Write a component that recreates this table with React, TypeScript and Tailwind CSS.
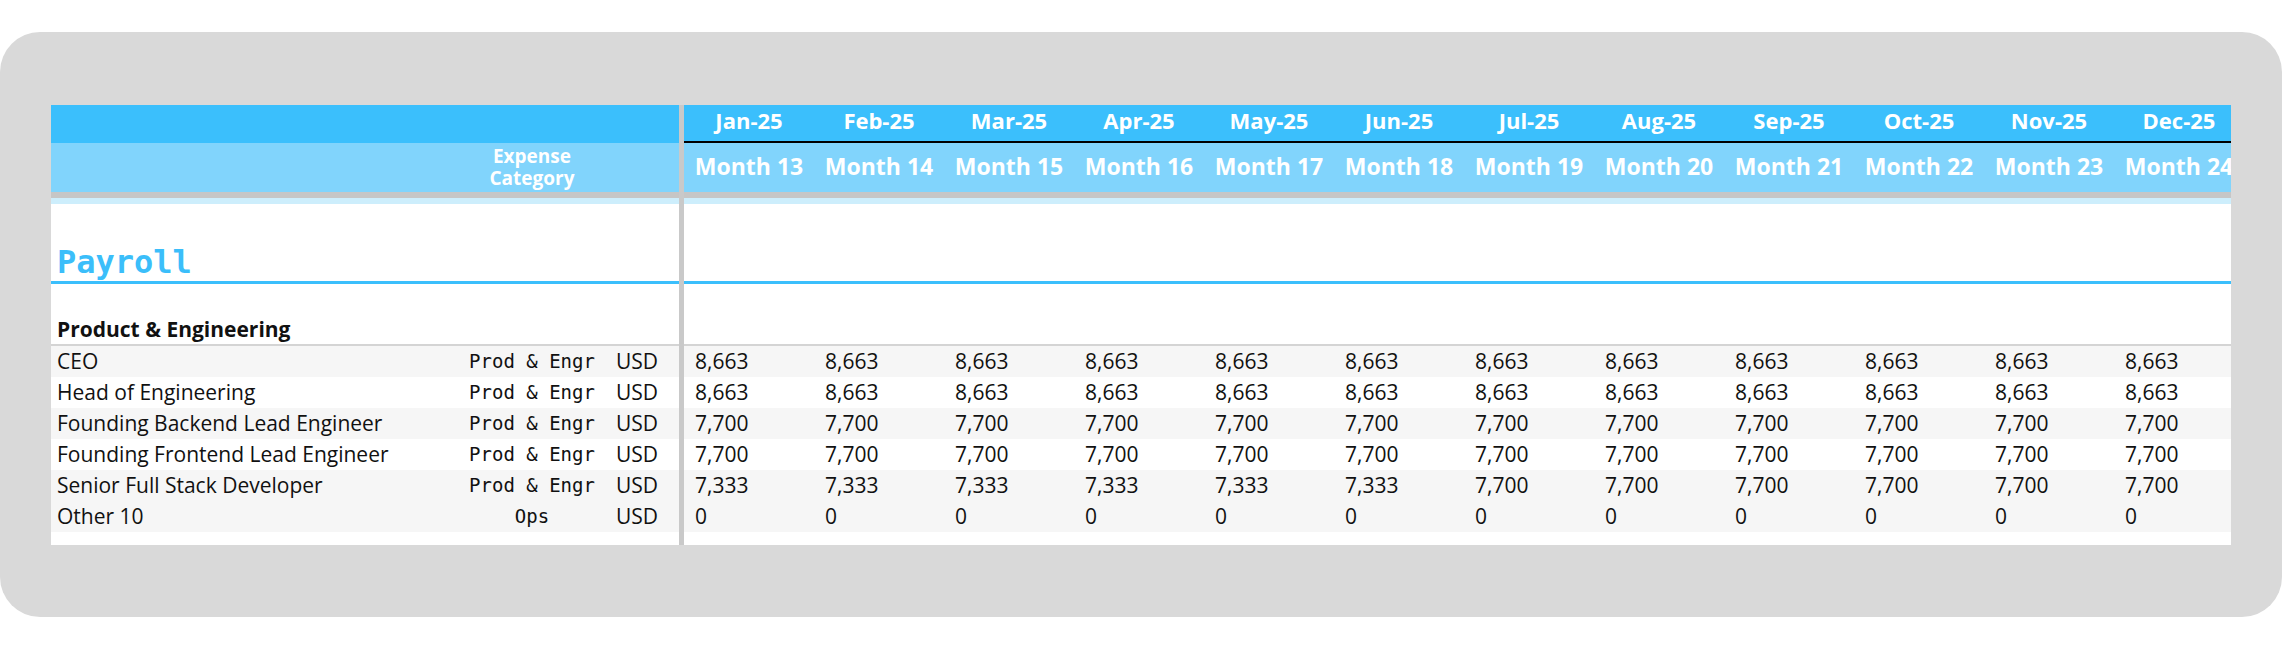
import React from 'react'

// Month headers, left to right
const MONTHS = [
  'Jan-25', 'Feb-25', 'Mar-25', 'Apr-25', 'May-25', 'Jun-25',
  'Jul-25', 'Aug-25', 'Sep-25', 'Oct-25', 'Nov-25', 'Dec-25',
]

const repeat = (v: string, n: number) => Array.from({ length: n }, () => v)

// Payroll lines for Product & Engineering
const ROWS = [
  { name: 'CEO', category: 'Prod & Engr', values: repeat('8,663', 12), shaded: true },
  { name: 'Head of Engineering', category: 'Prod & Engr', values: repeat('8,663', 12), shaded: false },
  { name: 'Founding Backend Lead Engineer', category: 'Prod & Engr', values: repeat('7,700', 12), shaded: true },
  { name: 'Founding Frontend Lead Engineer', category: 'Prod & Engr', values: repeat('7,700', 12), shaded: false },
  {
    name: 'Senior Full Stack Developer',
    category: 'Prod & Engr',
    values: [...repeat('7,333', 6), ...repeat('7,700', 6)],
    shaded: true,
  },
  { name: 'Other 10', category: 'Ops', values: repeat('0', 12), shaded: true },
]

const sans = "font-['Open_Sans',sans-serif]"
const mono = "font-['DejaVu_Sans_Mono',monospace]"

function Separator() {
  return <div className="w-[5px] shrink-0 self-stretch bg-[#c9c9c9]" />
}

// One spreadsheet row: left label block, the grey divider, then the month cells
function Row({
  className,
  left,
  right,
}: {
  className?: string
  left?: React.ReactNode
  right?: React.ReactNode
}) {
  return (
    <div className={`flex w-full shrink-0 ${className ?? ''}`}>
      <div className="flex w-[628px] shrink-0">{left}</div>
      <Separator />
      <div className="flex min-w-0 flex-1 overflow-hidden">{right}</div>
    </div>
  )
}

export default function App() {
  return (
    <div className={`h-[650px] w-full bg-white pt-[32px] ${sans}`}>
      <div className="h-[585px] w-full rounded-[40px] bg-[#d9d9d9] pl-[51px] pt-[73px]">
        <div className="flex h-[440px] w-[2180px] flex-col overflow-hidden bg-white">
          {/* Dates row */}
          <Row
            className="h-[38px]"
            left={<div className="h-full w-full bg-[#3bbffc]" />}
            right={
              <div className="flex h-full w-full border-b-2 border-black bg-[#3bbffc]">
                {MONTHS.map((m) => (
                  <div
                    key={m}
                    className="w-[130px] shrink-0 text-center text-[22px] font-bold leading-[30px] text-white"
                  >
                    {m}
                  </div>
                ))}
              </div>
            }
          />

          {/* Month index row */}
          <Row
            className="h-[49px]"
            left={
              <div className="flex h-full w-full bg-[#81d4fc] pr-[77px]">
                <div className="flex-1" />
                <div className="w-[140px] pt-[2px] text-center text-[19px] font-bold leading-[22px] text-white">
                  Expense
                  <br />
                  Category
                </div>
              </div>
            }
            right={
              <div className="flex h-full w-full bg-[#81d4fc]">
                {MONTHS.map((m, i) => (
                  <div
                    key={m}
                    className="w-[130px] shrink-0 pt-[8px] text-center text-[23px] font-bold leading-[31px] whitespace-nowrap text-white"
                  >
                    Month {13 + i}
                  </div>
                ))}
              </div>
            }
          />

          <Row className="h-[6px] bg-[#c6c6c6]" />
          <Row
            className="h-[6px]"
            left={<div className="h-full w-full bg-[#cdeefc]" />}
            right={<div className="h-full w-full bg-[#cdeefc]" />}
          />

          {/* Section title */}
          <Row
            className="h-[80px]"
            left={
              <div className="flex h-full w-full items-end border-b-[3px] border-[#3bbffc] pb-[3px] pl-[6px]">
                <span className={`${mono} text-[32px] font-bold leading-none text-[#3bbefa]`}>Payroll</span>
              </div>
            }
            right={<div className="h-full w-full border-b-[3px] border-[#3bbffc]" />}
          />

          {/* Group heading */}
          <Row
            className="h-[62px]"
            left={
              <div className="flex h-full w-full items-end border-b-2 border-[#d4d4d4] pb-[4px] pl-[6px]">
                <span className="text-[21px] font-bold leading-none text-[#111]">Product &amp; Engineering</span>
              </div>
            }
            right={<div className="h-full w-full border-b-2 border-[#d4d4d4]" />}
          />

          {ROWS.map((row) => {
            const bg = row.shaded ? 'bg-[#f6f6f6]' : 'bg-white'
            return (
              <Row
                key={row.name}
                className="h-[31px] text-[21px] leading-[31px] text-[#111]"
                left={
                  <div className={`flex h-full w-full pl-[6px] pr-[21px] ${bg}`}>
                    <div className="flex-1 whitespace-nowrap">{row.name}</div>
                    <div className={`${mono} w-[140px] text-center text-[19px] whitespace-pre`}>{row.category}</div>
                    <div className="w-[56px] text-right">USD</div>
                  </div>
                }
                right={
                  <div className={`flex h-full w-full ${bg}`}>
                    {row.values.map((v, i) => (
                      <div key={i} className="w-[130px] shrink-0 pl-[11px]">
                        {v}
                      </div>
                    ))}
                  </div>
                }
              />
            )
          })}

          {/* Bottom padding */}
          <Row className="flex-1" />
        </div>
      </div>
    </div>
  )
}
